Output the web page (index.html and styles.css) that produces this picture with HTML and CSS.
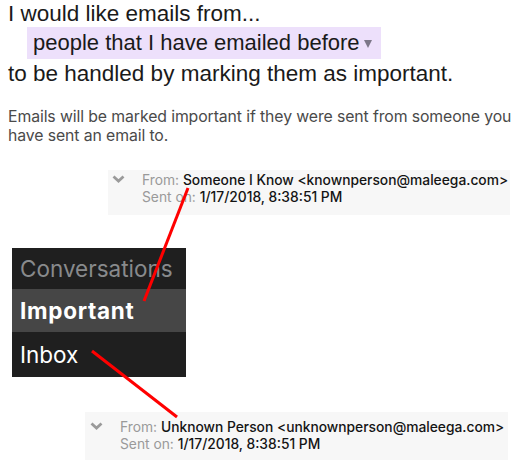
FILE: index.html
```html
<!DOCTYPE html>
<html>
<head>
<meta charset="utf-8">
<link rel="stylesheet" href="styles.css">
</head>
<body>
<div class="page">
  <div class="intro">
    <div class="line">I would like emails from...</div>
    <div class="select"><span>people that I have emailed before</span><span class="caret"></span></div>
    <div class="line">to be handled by marking them as important.</div>
  </div>
  <p class="desc">Emails will be marked important if they were sent from someone you have sent an email to.</p>

  <div class="email email-known">
    <svg class="chev" width="13" height="8" viewBox="0 0 13 8"><polyline points="1.5,1.5 6.5,6 11.5,1.5" fill="none" stroke="#9a9a9a" stroke-width="2.8"/></svg>
    <div class="meta">
      <div><span class="lbl">From:</span> <span class="val">Someone I Know &lt;knownperson@maleega.com&gt;</span></div>
      <div><span class="lbl">Sent on:</span> <span class="val">1/17/2018, 8:38:51 PM</span></div>
    </div>
  </div>

  <div class="folders">
    <div class="folder head">Conversations</div>
    <div class="folder active">Important</div>
    <div class="folder last">Inbox</div>
  </div>

  <div class="email email-unknown">
    <svg class="chev" width="13" height="8" viewBox="0 0 13 8"><polyline points="1.5,1.5 6.5,6 11.5,1.5" fill="none" stroke="#9a9a9a" stroke-width="2.8"/></svg>
    <div class="meta">
      <div><span class="lbl">From:</span> <span class="val">Unknown Person &lt;unknownperson@maleega.com&gt;</span></div>
      <div><span class="lbl">Sent on:</span> <span class="val">1/17/2018, 8:38:51 PM</span></div>
    </div>
  </div>

  <svg class="arrows" width="524" height="464" viewBox="0 0 524 464">
    <line x1="188" y1="188" x2="144" y2="301" stroke="#ff0000" stroke-width="3"/>
    <line x1="92" y1="351" x2="177" y2="417" stroke="#ff0000" stroke-width="3"/>
  </svg>
</div>
</body>
</html>
```

FILE: styles.css
```css
html, body { margin: 0; padding: 0; background: #fff; }
.page { position: relative; width: 524px; height: 464px; overflow: hidden; padding: 1px 0 0 8px; box-sizing: border-box; }
.intro { font-family: "Liberation Sans", Arial, sans-serif; font-size: 22.5px; color: #1a1a1a; }
.line { line-height: 25px; }
.select {
  display: inline-flex; align-items: center; margin: 1px 0 2px 19px; box-sizing: border-box;
  background: #ede0fb; height: 32px; width: 354px; padding: 0 0 0 6px; line-height: 32px; font-size: 22px;
}
.caret {
  display: inline-block; width: 0; height: 0; margin-left: 4px; margin-top: 2px;
  border-left: 4px solid transparent; border-right: 4px solid transparent; border-top: 8px solid #7d7789;
}
.desc {
  font-family: Inter, "Noto Sans", sans-serif; font-size: 15.8px; line-height: 19px;
  color: #4a4a4a; margin: 21px 0 0 0; width: 510px; letter-spacing: -0.1px;
}
.email {
  display: flex; align-items: flex-start; background: #f7f7f7; box-sizing: border-box;
  font-family: Inter, "Noto Sans", sans-serif; font-size: 13.8px; line-height: 17px;
}
.email-known { margin: 25px 0 0 100px; width: 402px; height: 45px; padding-top: 2px; }
.email-unknown { margin: 35px 0 0 77px; width: 423px; height: 48px; padding-top: 7px; }
.chev { flex: none; margin: 3px 0 0 4px; }
.email-unknown .chev { margin-left: 5px; }
.meta { margin-left: 17px; white-space: nowrap; }
.email-unknown .meta { margin-left: 17px; }
.lbl { color: #9a9a9a; }
.val { color: #141414; font-weight: 500; }
.folders { margin: 33px 0 0 4px; width: 174px; background: #1f1f1f; font-family: Inter, "Noto Sans", sans-serif; font-size: 22.5px; }
.folder { padding-left: 8px; color: #fff; }
.folder.head { height: 41px; line-height: 41px; color: #888a8c; }
.folder.active { height: 43px; line-height: 43px; background: #464646; font-weight: 700; letter-spacing: 0.7px; }
.folder.last { height: 45px; line-height: 45px; }
.arrows { position: absolute; left: 0; top: 0; pointer-events: none; }
```
